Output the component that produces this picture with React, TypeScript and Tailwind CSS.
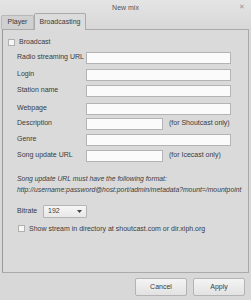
import { useState } from "react";

const font = { fontFamily: '"Liberation Sans", Arial, sans-serif' };

function Row({
  label,
  narrow,
  note,
  className = "",
}: {
  label: string;
  narrow?: boolean;
  note?: string;
  className?: string;
}) {
  return (
    <div className={`flex items-center h-[12px] ${className}`}>
      <span className="w-[83px] shrink-0 pl-[14px] text-[7px] text-[#3a3a3a] whitespace-nowrap">
        {label}
      </span>
      <div
        className={`h-[12px] shrink-0 border border-[#b4b4b4] bg-[#fbfbfb] ${
          narrow ? "w-[77px]" : "w-[145px]"
        }`}
      />
      {note && (
        <span className="ml-[6px] text-[7px] text-[#3a3a3a] whitespace-nowrap">{note}</span>
      )}
    </div>
  );
}

function Checkbox({ checked, onClick }: { checked: boolean; onClick: () => void }) {
  return (
    <button
      type="button"
      onClick={onClick}
      className="h-[7px] w-[7px] shrink-0 border border-[#b0b0b0] bg-[#f6f6f6]"
    >
      {checked && <span className="block h-full w-full bg-[#777]" />}
    </button>
  );
}

export default function App() {
  const [broadcast, setBroadcast] = useState<boolean>(false);
  const [listed, setListed] = useState<boolean>(false);

  return (
    <div className="flex h-[300px] w-[251px] flex-col bg-[#d8d8d8]" style={font}>
      <div className="relative h-[29px] shrink-0 bg-gradient-to-b from-[#e4e4e4] to-[#d8d8d8]">
        <div className="pt-[3px] text-center text-[7px] text-[#555]">New mix</div>
        <span className="absolute right-[6px] top-[3px] text-[7px] leading-none text-[#999]">✕</span>
        <div className="absolute bottom-0 left-[1px] flex items-end">
          <div className="flex h-[14px] w-[33px] items-center justify-center rounded-t-[2px] border border-b-0 border-[#b8b8b8] bg-[#d0d0d0] text-[7px] text-[#3a3a3a]">
            Player
          </div>
          <div className="relative top-[1px] flex h-[17px] w-[52px] items-center justify-center rounded-t-[2px] border border-b-0 border-[#aaa] bg-[#dcdcdc] text-[7px] text-[#3a3a3a]">
            Broadcasting
          </div>
        </div>
      </div>

      <div className="mx-[2px] flex h-[244px] shrink-0 flex-col border border-[#aaa] border-l-[#9a9a9a] bg-[#dadada]">
        <div className="mt-[7px] flex items-center gap-[4px] pl-[5px]">
          <Checkbox checked={broadcast} onClick={() => setBroadcast((p) => !p)} />
          <span className="text-[7px] text-[#3a3a3a]">Broadcast</span>
        </div>
        <Row label="Radio streaming URL" className="mt-[4px]" />
        <Row label="Login" className="mt-[5px]" />
        <Row label="Station name" className="mt-[4px]" />
        <Row label="Webpage" className="mt-[6px]" />
        <Row label="Description" narrow note="(for Shoutcast only)" className="mt-[3px]" />
        <Row label="Genre" className="mt-[4px]" />
        <Row label="Song update URL" narrow note="(for Icecast only)" className="mt-[4px]" />

        <div className="mt-[11px] pl-[14px] text-[6.8px] italic leading-[11px] text-[#3a3a3a] whitespace-nowrap">
          <div>Song update URL must have the following format:</div>
          <div>http://username:password@host:port/admin/metadata?mount=/mountpoint</div>
        </div>

        <div className="mt-[10px] flex h-[13px] items-center">
          <span className="w-[40px] shrink-0 pl-[14px] text-[7px] text-[#3a3a3a]">Bitrate</span>
          <div className="flex h-[13px] w-[44px] items-center justify-between rounded-[1px] border border-[#b4b4b4] bg-gradient-to-b from-[#f6f6f6] to-[#e8e8e8] px-[4px]">
            <span className="text-[7px] text-[#3a3a3a]">192</span>
            <svg width="5" height="3" viewBox="0 0 5 3">
              <path d="M0 0h5L2.5 3z" fill="#444" />
            </svg>
          </div>
        </div>

        <div className="mt-[6px] flex items-center gap-[4px] pl-[15px]">
          <Checkbox checked={listed} onClick={() => setListed((p) => !p)} />
          <span className="text-[7px] text-[#3a3a3a] whitespace-nowrap">
            Show stream in directory at shoutcast.com or dir.xiph.org
          </span>
        </div>
      </div>

      <div className="flex flex-1 items-start justify-end gap-[6px] pr-[6px] pt-[5px]">
        <button
          type="button"
          className="h-[18px] w-[52px] rounded-[2px] border border-[#b4b4b4] bg-gradient-to-b from-[#f4f4f4] to-[#e2e2e2] text-[7px] text-[#3a3a3a]"
        >
          Cancel
        </button>
        <button
          type="button"
          className="h-[18px] w-[52px] rounded-[2px] border border-[#b4b4b4] bg-gradient-to-b from-[#f4f4f4] to-[#e2e2e2] text-[7px] text-[#3a3a3a]"
        >
          Apply
        </button>
      </div>
    </div>
  );
}
